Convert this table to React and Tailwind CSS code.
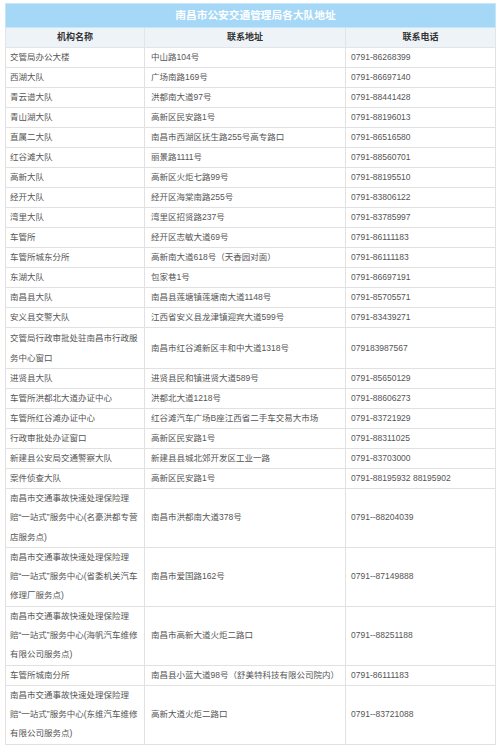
import React from "react";

const Q1 = "\u201C";
const Q2 = "\u201D";

const rows = [
  [["交管局办公大楼"], "中山路104号", "0791-86268399"],
  [["西湖大队"], "广场南路169号", "0791-86697140"],
  [["青云谱大队"], "洪都南大道97号", "0791-88441428"],
  [["青山湖大队"], "高新区民安路1号", "0791-88196013"],
  [["直属二大队"], "南昌市西湖区抚生路255号高专路口", "0791-86516580"],
  [["红谷滩大队"], "丽景路1111号", "0791-88560701"],
  [["高新大队"], "高新区火炬七路99号", "0791-88195510"],
  [["经开大队"], "经开区海棠南路255号", "0791-83806122"],
  [["湾里大队"], "湾里区招贤路237号", "0791-83785997"],
  [["车管所"], "经开区志敏大道69号", "0791-86111183"],
  [["车管所城东分所"], "高新南大道618号（天香园对面）", "0791-86111183"],
  [["东湖大队"], "包家巷1号", "0791-86697191"],
  [["南昌县大队"], "南昌县莲塘镇莲塘南大道1148号", "0791-85705571"],
  [["安义县交警大队"], "江西省安义县龙津镇迎宾大道599号", "0791-83439271"],
  [["交管局行政审批处驻南昌市行政服", "务中心窗口"], "南昌市红谷滩新区丰和中大道1318号", "079183987567"],
  [["进贤县大队"], "进贤县民和镇进贤大道589号", "0791-85650129"],
  [["车管所洪都北大道办证中心"], "洪都北大道1218号", "0791-88606273"],
  [["车管所红谷滩办证中心"], "红谷滩汽车广场B座江西省二手车交易大市场", "0791-83721929"],
  [["行政审批处办证窗口"], "高新区民安路1号", "0791-88311025"],
  [["新建县公安局交通警察大队"], "新建县县城北郊开发区工业一路", "0791-83703000"],
  [["案件侦查大队"], "高新区民安路1号", "0791-88195932 88195902"],
  [["南昌市交通事故快速处理保险理", "赔" + Q1 + "一站式" + Q2 + "服务中心(名豪洪都专营", "店服务点)"], "南昌市洪都南大道378号", "0791--88204039"],
  [["南昌市交通事故快速处理保险理", "赔" + Q1 + "一站式" + Q2 + "服务中心(省委机关汽车", "修理厂服务点)"], "南昌市爱国路162号", "0791--87149888"],
  [["南昌市交通事故快速处理保险理", "赔" + Q1 + "一站式" + Q2 + "服务中心(海帆汽车维修", "有限公司服务点)"], "南昌市高新大道火炬二路口", "0791--88251188"],
  [["车管所城南分所"], "南昌县小蓝大道98号（舒美特科技有限公司院内）", "0791-86111183"],
  [["南昌市交通事故快速处理保险理", "赔" + Q1 + "一站式" + Q2 + "服务中心(东维汽车维修", "有限公司服务点)"], "高新大道火炬二路口", "0791--83721088"],
];

const font = { fontFamily: '"Liberation Sans", "Noto Sans CJK SC", sans-serif' };

function rowHeightClass(n) {
  if (n === 1) return "h-[20px]";
  if (n === 2) return "h-[40px]";
  return "h-[58px]";
}

export default function App() {
  return (
    <div className="w-[500px] h-[745px] bg-white pt-[3px] pl-[5px]" style={font}>
      <table className="table-fixed w-[490px] border-collapse text-[8.5px] text-[#555]">
        <colgroup>
          <col className="w-[139px]" />
          <col className="w-[201px]" />
          <col className="w-[150px]" />
        </colgroup>
        <tbody>
          <tr className="h-[24px]">
            <td colSpan={3} className="bg-[#a5d7f6] border border-[#c9e6f8] text-center text-white text-[10.7px] font-bold align-middle p-0 pl-[10px]">
              南昌市公安交通管理局各大队地址
            </td>
          </tr>
          <tr className="h-[20px] bg-[#eef3f8]">
            <th className="border border-[#e1e4e8] font-bold text-[9px] text-[#333] text-center p-0">机构名称</th>
            <th className="border border-[#e1e4e8] font-bold text-[9px] text-[#333] text-center p-0">联系地址</th>
            <th className="border border-[#e1e4e8] font-bold text-[9px] text-[#333] text-center p-0">联系电话</th>
          </tr>
          {rows.map((r, i) => {
            const n = r[0].length;
            const lh = n === 1 ? "leading-[19px]" : n === 2 ? "leading-[20px]" : "leading-[19.3px]";
            return (
              <tr key={i} className={rowHeightClass(n)}>
                <td className={"border border-[#e1e1e1] align-middle py-0 pl-[4px] pr-0 whitespace-nowrap " + lh}>
                  {r[0].map((line, j) => (
                    <div key={j}>{line}</div>
                  ))}
                </td>
                <td className="border border-[#e1e1e1] align-middle py-0 pl-[6px] pr-0 whitespace-nowrap leading-[19px]">{r[1]}</td>
                <td className="border border-[#e1e1e1] align-middle py-0 pl-[5px] pr-0 whitespace-nowrap leading-[19px]">{r[2]}</td>
              </tr>
            );
          })}
        </tbody>
      </table>
    </div>
  );
}
